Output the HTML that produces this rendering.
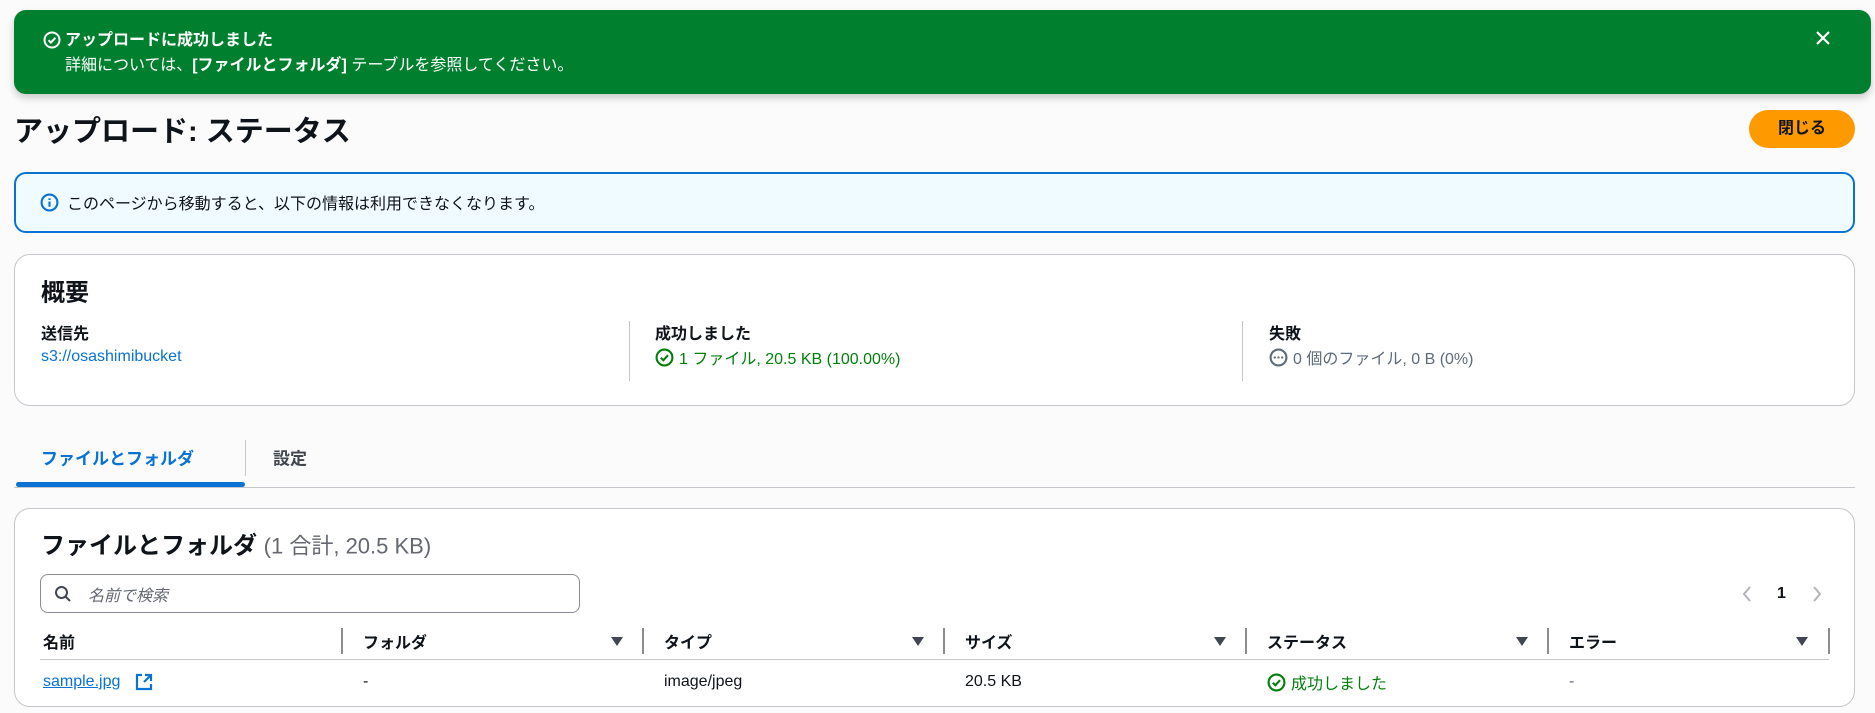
<!DOCTYPE html>
<html><head><meta charset="utf-8"><style>
*{box-sizing:border-box;margin:0;padding:0}
body{width:1875px;height:713px;background:#fbfbfc;font-family:"Liberation Sans","Noto Sans CJK JP",sans-serif;color:#0f141a;font-size:16px;position:relative;overflow:hidden}
.abs{position:absolute}
.flash{left:14px;top:10px;width:1857px;height:84px;background:#00802f;border-radius:12px;color:#fff;box-shadow:0 4px 8px rgba(0,0,0,.2)}
.card{background:#fff;border:1px solid #c6c6cd;border-radius:16px}
.b{font-weight:bold}
.vt{transform:translateY(-50%)}
.div{background:#c6c6cd;width:1px}
.thd{background:#8c8c94;width:2px;height:26px;top:628px}
.tri{width:0;height:0;border-left:6px solid transparent;border-right:6px solid transparent;border-top:9px solid #424650;top:637px}
</style></head><body>
<div class="abs flash">
  <svg class="abs" style="left:29px;top:21px" width="18" height="18" viewBox="0 0 18 18"><circle cx="9" cy="9" r="7.5" fill="none" stroke="#fff" stroke-width="2"/><path d="M5.5 9.2l2.4 2.4 4.5-4.8" fill="none" stroke="#fff" stroke-width="2"/></svg>
  <div class="abs b vt" style="left:51px;top:28px;font-size:16px">アップロードに成功しました</div>
  <div class="abs vt" style="left:51px;top:53px;font-size:16px">詳細については、<b>[ファイルとフォルダ]</b> テーブルを参照してください。</div>
  <svg class="abs" style="left:1801px;top:20px" width="16" height="16" viewBox="0 0 16 16"><path d="M2 2l12 12M14 2L2 14" stroke="#fff" stroke-width="2.2"/></svg>
</div>
<div class="abs b vt" style="left:14px;top:129px;font-size:29px">アップロード: ステータス</div>
<div class="abs b" style="left:1749px;top:110px;width:106px;height:38px;background:#ff9900;border-radius:20px;text-align:center;line-height:38px;font-size:16px">閉じる</div>
<div class="abs" style="left:14px;top:172px;width:1841px;height:61px;border:2px solid #0972d3;border-radius:12px;background:#f0fbff">
  <svg class="abs" style="left:24px;top:19px" width="19" height="19" viewBox="0 0 18 18"><circle cx="9" cy="9" r="7.5" fill="none" stroke="#0972d3" stroke-width="2"/><path d="M9 8v5M9 5v1.6" stroke="#0972d3" stroke-width="2"/></svg>
  <div class="abs vt" style="left:51px;top:28px">このページから移動すると、以下の情報は利用できなくなります。</div>
</div>
<div class="abs card" style="left:14px;top:254px;width:1841px;height:152px">
  <div class="abs b vt" style="left:26px;top:35px;font-size:24px">概要</div>
  <div class="abs b vt" style="left:26px;top:77px">送信先</div>
  <div class="abs vt" style="left:26px;top:102px;color:#0972d3">s3://osashimibucket</div>
  <div class="abs div" style="left:614px;top:66px;height:60px"></div>
  <div class="abs b vt" style="left:640px;top:77px">成功しました</div>
  <svg class="abs" style="left:640px;top:93px" width="19" height="19" viewBox="0 0 18 18"><circle cx="9" cy="9" r="7.5" fill="none" stroke="#037f0c" stroke-width="2"/><path d="M5.5 9.2l2.4 2.4 4.5-4.8" fill="none" stroke="#037f0c" stroke-width="2"/></svg>
  <div class="abs vt" style="left:664px;top:102px;color:#037f0c">1 ファイル, 20.5 KB (100.00%)</div>
  <div class="abs div" style="left:1227px;top:66px;height:60px"></div>
  <div class="abs b vt" style="left:1254px;top:77px">失敗</div>
  <svg class="abs" style="left:1254px;top:93px" width="19" height="19" viewBox="0 0 18 18"><circle cx="9" cy="9" r="7.5" fill="none" stroke="#5f6b7a" stroke-width="2"/><circle cx="5.5" cy="9" r="1.1" fill="#5f6b7a"/><circle cx="9" cy="9" r="1.1" fill="#5f6b7a"/><circle cx="12.5" cy="9" r="1.1" fill="#5f6b7a"/></svg>
  <div class="abs vt" style="left:1278px;top:102px;color:#5f6b7a">0 個のファイル, 0 B (0%)</div>
</div>
<div class="abs b vt" style="left:41px;top:457px;color:#0972d3;font-size:17px">ファイルとフォルダ</div>
<div class="abs div" style="left:245px;top:440px;height:36px"></div>
<div class="abs b vt" style="left:273px;top:457px;font-size:17px;color:#424650">設定</div>
<div class="abs" style="left:14px;top:487px;width:1841px;height:1px;background:#c6c6cd"></div>
<div class="abs" style="left:16px;top:482px;width:229px;height:5px;background:#0972d3;border-radius:3px"></div>
<div class="abs card" style="left:14px;top:508px;width:1841px;height:199px"></div>
<div class="abs vt" style="left:41px;top:543px;font-size:24px"><b>ファイルとフォルダ</b> <span style="color:#656871;font-size:22px">(1 合計, 20.5 KB)</span></div>
<div class="abs" style="left:40px;top:574px;width:540px;height:39px;border:1px solid #8c8c94;border-radius:8px;background:#fff">
  <svg class="abs" style="left:13px;top:10px" width="18" height="18" viewBox="0 0 18 18"><circle cx="7.5" cy="7.5" r="5.5" fill="none" stroke="#424650" stroke-width="2"/><path d="M11.5 11.5l4.5 4.5" stroke="#424650" stroke-width="2"/></svg>
  <div class="abs vt" style="left:47px;top:19px;color:#656871;font-style:italic">名前で検索</div>
</div>
<svg class="abs" style="left:1741px;top:585px" width="12" height="18" viewBox="0 0 12 18"><path d="M9 2L3 9l6 7" fill="none" stroke="#b4b4bb" stroke-width="2"/></svg>
<div class="abs b vt" style="left:1777px;top:594px">1</div>
<svg class="abs" style="left:1811px;top:585px" width="12" height="18" viewBox="0 0 12 18"><path d="M3 2l6 7-6 7" fill="none" stroke="#b4b4bb" stroke-width="2"/></svg>
<div class="abs b vt" style="left:43px;top:641px">名前</div>
<div class="abs thd" style="left:341px"></div>
<div class="abs b vt" style="left:363px;top:641px">フォルダ</div>
<div class="abs tri" style="left:611px"></div>
<div class="abs thd" style="left:642px"></div>
<div class="abs b vt" style="left:664px;top:641px">タイプ</div>
<div class="abs tri" style="left:912px"></div>
<div class="abs thd" style="left:943px"></div>
<div class="abs b vt" style="left:965px;top:641px">サイズ</div>
<div class="abs tri" style="left:1214px"></div>
<div class="abs thd" style="left:1245px"></div>
<div class="abs b vt" style="left:1267px;top:641px">ステータス</div>
<div class="abs tri" style="left:1516px"></div>
<div class="abs thd" style="left:1547px"></div>
<div class="abs b vt" style="left:1569px;top:641px">エラー</div>
<div class="abs tri" style="left:1796px"></div>
<div class="abs thd" style="left:1828px"></div>
<div class="abs" style="left:40px;top:659px;width:1789px;height:1px;background:#c6c6cd"></div>
<div class="abs vt" style="left:43px;top:682px;color:#0972d3;text-decoration:underline">sample.jpg</div>
<svg class="abs" style="left:135px;top:673px" width="18" height="18" viewBox="0 0 18 18"><path d="M7 2H2v14h14v-5" fill="none" stroke="#0972d3" stroke-width="2.2"/><path d="M10 2h6v6M16 2L9 9" fill="none" stroke="#0972d3" stroke-width="2.2"/></svg>
<div class="abs vt" style="left:363px;top:682px">-</div>
<div class="abs vt" style="left:664px;top:682px">image/jpeg</div>
<div class="abs vt" style="left:965px;top:682px">20.5 KB</div>
<svg class="abs" style="left:1267px;top:673px" width="19" height="19" viewBox="0 0 18 18"><circle cx="9" cy="9" r="7.5" fill="none" stroke="#037f0c" stroke-width="2"/><path d="M5.5 9.2l2.4 2.4 4.5-4.8" fill="none" stroke="#037f0c" stroke-width="2"/></svg>
<div class="abs vt" style="left:1291px;top:682px;color:#037f0c">成功しました</div>
<div class="abs vt" style="left:1569px;top:682px;color:#5f6b7a">-</div>
</body></html>
